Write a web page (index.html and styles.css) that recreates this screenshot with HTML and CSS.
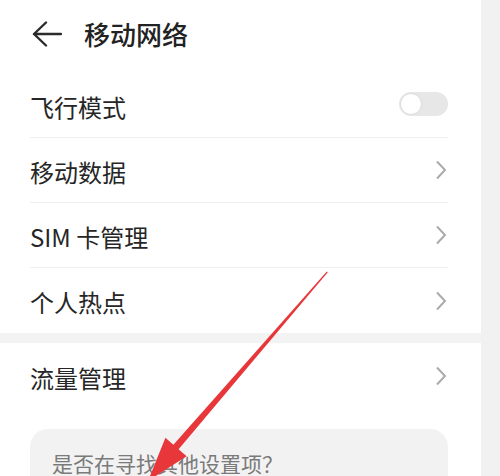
FILE: index.html
```html
<!DOCTYPE html>
<html lang="zh-CN">
<head>
<meta charset="utf-8">
<title>移动网络</title>
<link rel="stylesheet" href="styles.css">
</head>
<body>
<div class="screen">
  <div class="main">
    <header class="header">
      <svg class="back" width="30" height="26" viewBox="0 0 30 26"><path d="M2 13 H29 M14 1.5 L2 13 L14 24.5" fill="none" stroke="#2b2b2b" stroke-width="2.4" stroke-linecap="round" stroke-linejoin="round"/></svg>
      <h1 class="title">移动网络</h1>
    </header>
    <div class="list">
      <div class="row">
        <span class="label">飞行模式</span>
        <span class="toggle"><span class="knob"></span></span>
      </div>
      <div class="row">
        <span class="label">移动数据</span>
        <svg class="chev" width="12" height="20" viewBox="0 0 12 20"><path d="M2 1.5 L10 10 L2 18.5" fill="none" stroke="#ababab" stroke-width="2"/></svg>
      </div>
      <div class="row">
        <span class="label">SIM 卡管理</span>
        <svg class="chev" width="12" height="20" viewBox="0 0 12 20"><path d="M2 1.5 L10 10 L2 18.5" fill="none" stroke="#ababab" stroke-width="2"/></svg>
      </div>
      <div class="row">
        <span class="label">个人热点</span>
        <svg class="chev" width="12" height="20" viewBox="0 0 12 20"><path d="M2 1.5 L10 10 L2 18.5" fill="none" stroke="#ababab" stroke-width="2"/></svg>
      </div>
    </div>
    <div class="band"></div>
    <div class="list">
      <div class="row row-tall">
        <span class="label">流量管理</span>
        <svg class="chev" width="12" height="20" viewBox="0 0 12 20"><path d="M2 1.5 L10 10 L2 18.5" fill="none" stroke="#ababab" stroke-width="2"/></svg>
      </div>
    </div>
    <div class="card">是否在寻找其他设置项？</div>
  </div>
  <div class="strip"></div>
  <svg class="annot" width="500" height="476" viewBox="0 0 500 476">
    <polygon fill="#e8373a" points="327.8,272.2 178.6,449.3 186.6,456.2 148,481 165.4,437.8 173.4,444.7 326.8,271.4"/>
  </svg>
</div>
</body>
</html>
```
FILE: styles.css
```css
html, body {
  margin: 0;
  padding: 0;
  background: #ffffff;
}
body {
  font-family: "Noto Sans CJK SC", "Noto Sans", sans-serif;
  color: #262626;
}
.screen {
  position: relative;
  width: 500px;
  height: 476px;
  overflow: hidden;
  display: flex;
}
.main {
  width: 481px;
  background: #ffffff;
}
.strip {
  flex: 1;
  background: #f1f1f1;
}
.header {
  height: 73px;
  display: flex;
  align-items: center;
  padding-left: 32px;
  gap: 22px;
  box-sizing: border-box;
  padding-bottom: 6px;
}
.back {
  display: block;
}
.title {
  margin: 0;
  font-size: 26px;
  font-weight: 500;
  line-height: 1;
  color: #222;
}
.list {
  margin: 0 33px 0 30px;
}
.row {
  height: 65px;
  box-sizing: border-box;
  display: flex;
  align-items: center;
  justify-content: space-between;
  border-bottom: 1px solid #eeeeee;
}
.row:last-child {
  border-bottom: none;
}
.row-tall {
  height: 66px;
}
.label {
  font-size: 24px;
  line-height: 1;
  padding-top: 3px;
}
.chev {
  display: block;
  margin-right: 1px;
}
.toggle {
  width: 49px;
  height: 24px;
  border-radius: 12px;
  background: #e7e7e7;
  position: relative;
  margin-top: -2px;
}
.knob {
  position: absolute;
  left: 1px;
  top: 1px;
  width: 20px;
  height: 20px;
  border-radius: 50%;
  background: #ffffff;
  border: 1px solid #dcdcdc;
}
.band {
  height: 10px;
  background: #f3f3f3;
}
.card {
  margin: 20px 33px 0 30px;
  background: #f2f2f2;
  border-radius: 18px;
  height: 80px;
  box-sizing: border-box;
  padding: 20px 0 0 22px;
  font-size: 21px;
  line-height: 1.4;
  color: #7a7a7a;
}
.annot {
  position: absolute;
  left: 0;
  top: 0;
  pointer-events: none;
}
```
